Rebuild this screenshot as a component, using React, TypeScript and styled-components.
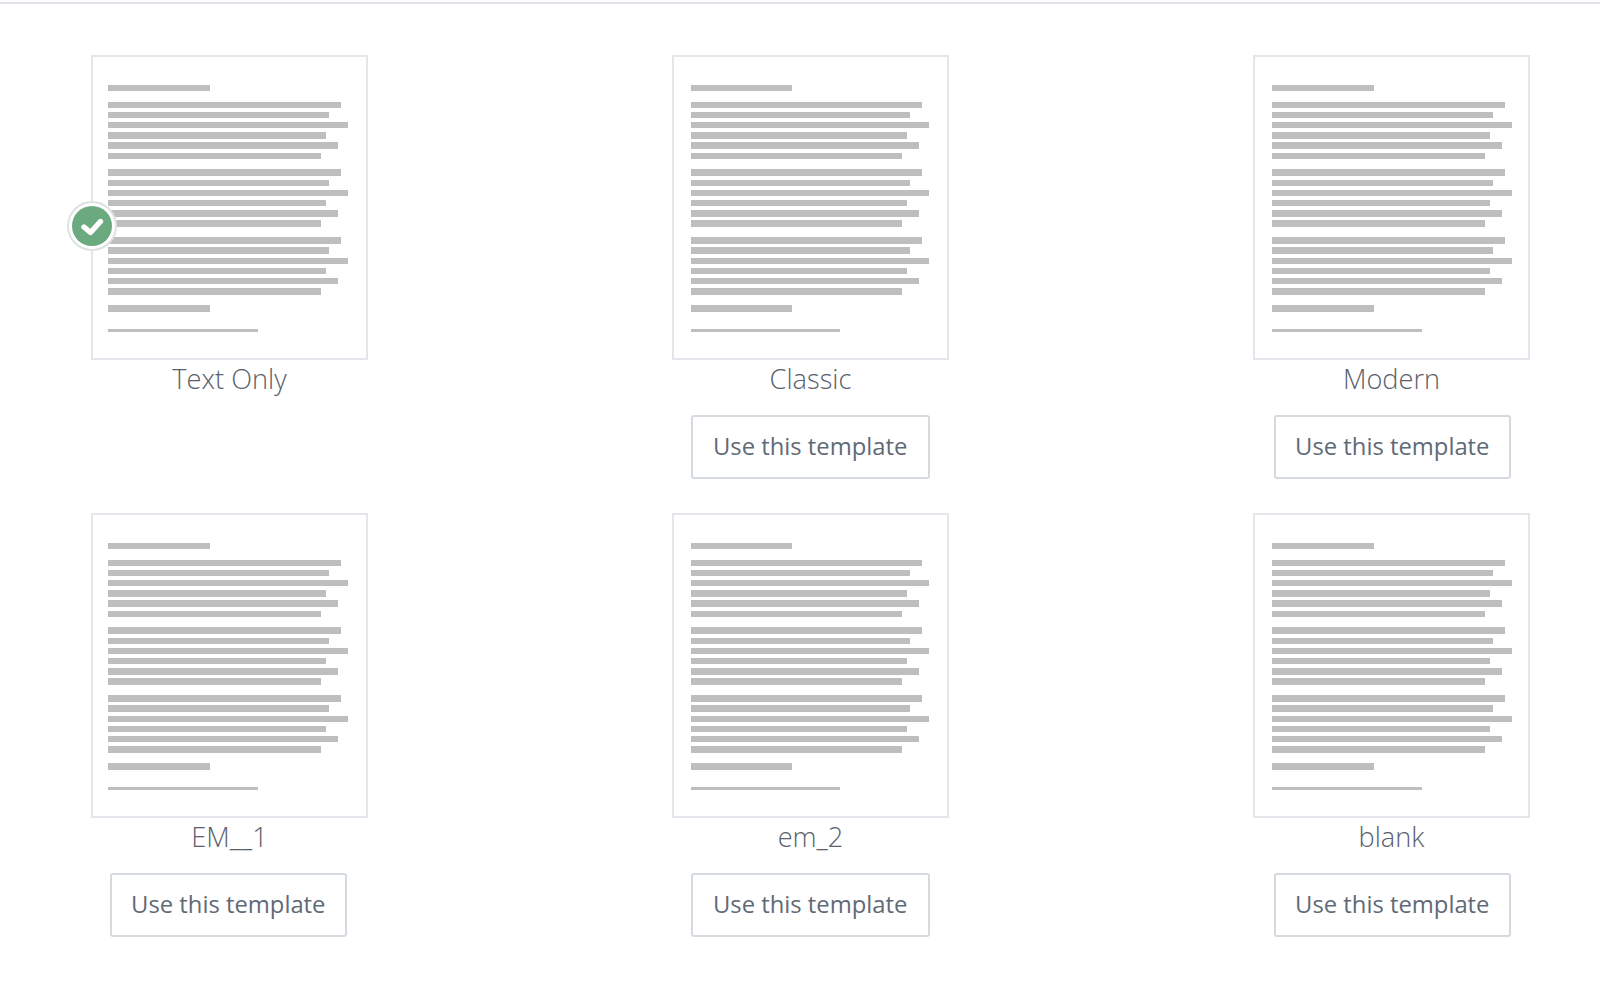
import React from "react";
import styled, { createGlobalStyle } from "styled-components";

const Global = createGlobalStyle`
  html, body { margin: 0; padding: 0; background: #fff; }
  body { font-family: "Open Sans", "Liberation Sans", sans-serif; }
`;

const Page = styled.div`
  width: 1600px;
  height: 994px;
  overflow: hidden;
  padding-top: 2px;
  box-sizing: border-box;
`;

const Rule = styled.div`
  height: 2px;
  background: #dfe3e8;
`;

const Grid = styled.div`
  display: grid;
  grid-template-columns: repeat(3, 277px);
  justify-content: space-between;
  row-gap: 34px;
  padding: 51px 70px 0 91px;
`;

const Card = styled.div`
  display: flex;
  flex-direction: column;
  align-items: center;
`;

const Paper = styled.div<{ $inset: number }>`
  position: relative;
  width: 277px;
  height: 305px;
  box-sizing: border-box;
  border: 2px solid #e3e7ec;
  padding: 27.7px 0 0 ${(p) => p.$inset}px;
  display: flex;
  flex-direction: column;
  align-items: flex-start;
`;

const Para = styled.div`
  display: flex;
  flex-direction: column;
  gap: 3.7px;
  margin-bottom: 10.4px;
`;

const Bar = styled.div<{ $w: number; $h?: number }>`
  width: ${(p) => p.$w}px;
  height: ${(p) => p.$h ?? 6.5}px;
  background: #bebebe;
`;

const Signature = styled(Bar)`
  margin-top: 17.4px;
`;

const Badge = styled.div`
  position: absolute;
  left: -26.5px;
  top: 144px;
  width: 50px;
  height: 50px;
`;

const Label = styled.div`
  margin: 2px 0 19px;
  font-size: 27.2px;
  line-height: 34px;
  font-weight: 300;
  color: #5a616b;
  white-space: nowrap;
`;

const TemplateButton = styled.button<{ $w: number; $shift: number }>`
  width: ${(p) => p.$w}px;
  height: 64px;
  margin-left: ${(p) => p.$shift}px;
  box-sizing: border-box;
  background: #fff;
  border: 2px solid #d5dae1;
  border-radius: 3px;
  padding: 0 0 2px;
  font-family: inherit;
  font-size: 23.8px;
  font-weight: 400;
  color: #5f6a77;
  white-space: nowrap;
`;

const widths = [233, 221, 239.7, 218, 229.7, 212.3];

const Paragraph = ({ scale }: { scale: number }) => (
  <Para>
    {widths.map((w, i) => (
      <Bar key={i} $w={w * scale} />
    ))}
  </Para>
);

const CheckBadge = () => (
  <Badge>
    <svg width="50" height="50" viewBox="0 0 50 50">
      <circle cx="25" cy="25" r="24" fill="#fff" stroke="#dde3df" strokeWidth="2" />
      <circle cx="25" cy="25" r="20" fill="#6ba97f" />
      <path
        d="M17 26 L23.5 31.5 L33.5 20.5"
        fill="none"
        stroke="#fff"
        strokeWidth="5.4"
        strokeLinecap="round"
        strokeLinejoin="round"
      />
    </svg>
  </Badge>
);

type Column = { inset: number; scale: number; buttonWidth: number; shift: number };

const columns: Column[] = [
  { inset: 15.3, scale: 1, buttonWidth: 236.7, shift: -2.4 },
  { inset: 17, scale: 0.992, buttonWidth: 239, shift: -0.6 },
  { inset: 17.4, scale: 1, buttonWidth: 237.4, shift: 1.6 },
];

const Template = ({ name, selected, column }: { name: string; selected?: boolean; column: Column }) => (
  <Card>
    <Paper $inset={column.inset}>
      <Para>
        <Bar $w={102 * column.scale} />
      </Para>
      <Paragraph scale={column.scale} />
      <Paragraph scale={column.scale} />
      <Paragraph scale={column.scale} />
      <Bar $w={102 * column.scale} />
      <Signature $w={150 * column.scale} $h={3.5} />
      {selected && <CheckBadge />}
    </Paper>
    <Label>{name}</Label>
    {!selected && (
      <TemplateButton $w={column.buttonWidth} $shift={column.shift}>
        Use this template
      </TemplateButton>
    )}
  </Card>
);

const templates = ["Text Only", "Classic", "Modern", "EM__1", "em_2", "blank"];

export default function App() {
  return (
    <Page>
      <Global />
      <Rule />
      <Grid>
        {templates.map((t, i) => (
          <Template key={t} name={t} selected={i === 0} column={columns[i % 3]} />
        ))}
      </Grid>
    </Page>
  );
}
